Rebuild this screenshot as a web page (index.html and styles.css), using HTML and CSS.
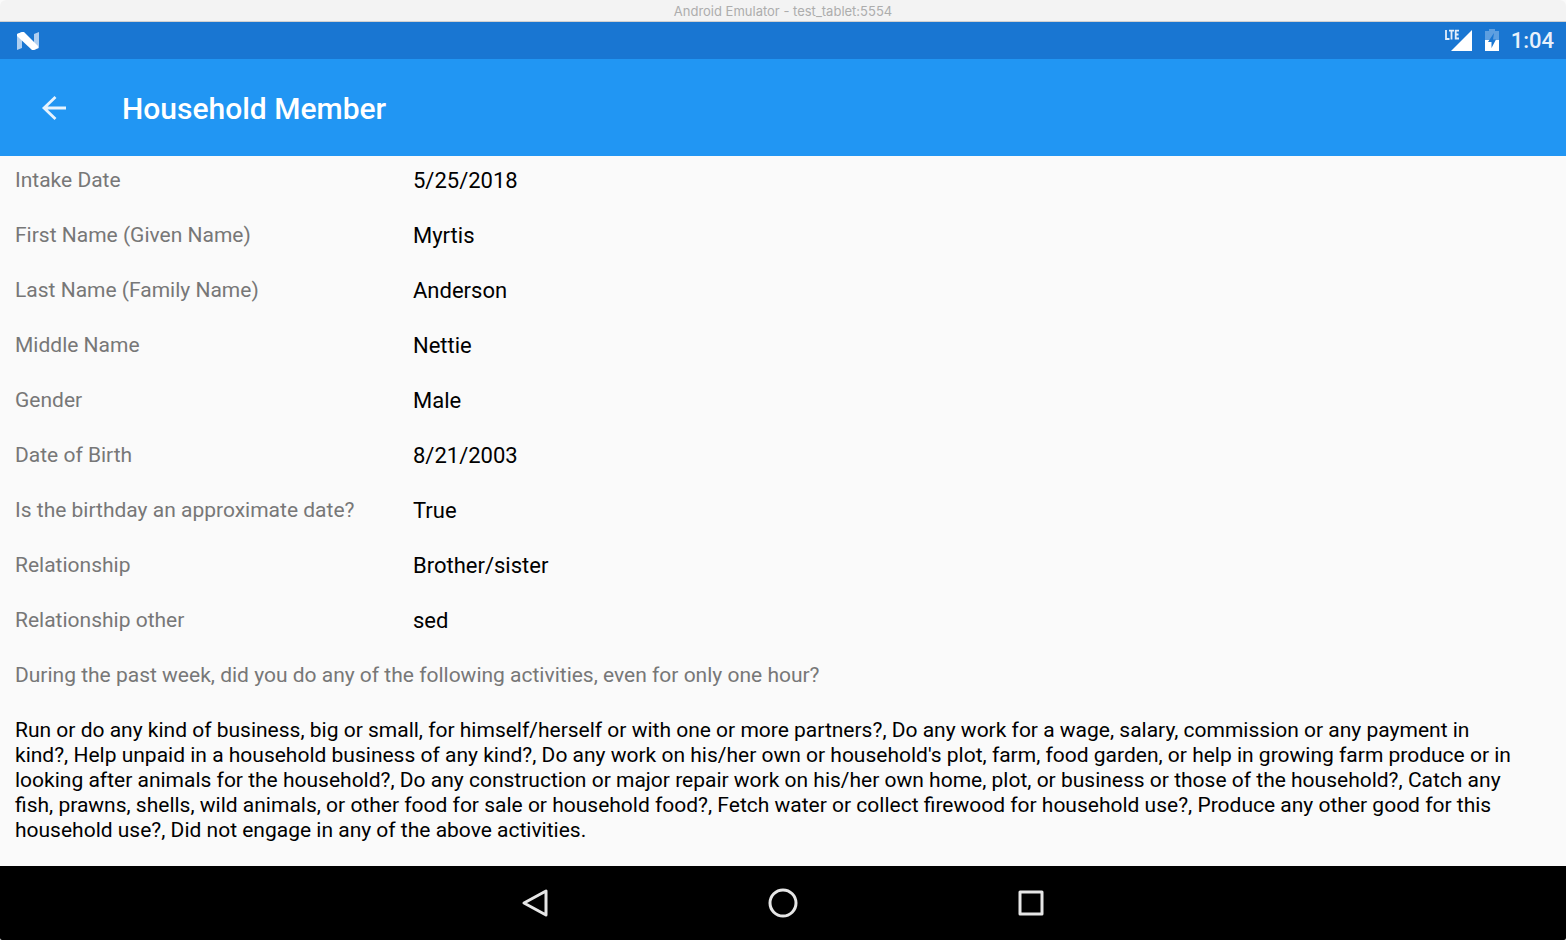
FILE: index.html
```html
<!DOCTYPE html>
<html lang="en">
<head>
<meta charset="utf-8">
<title>Household Member</title>
<link rel="stylesheet" href="styles.css">
</head>
<body>
<div class="window">
  <div class="titlebar">Android Emulator - test_tablet:5554</div>
  <div class="status">
    <svg class="logo" viewBox="0 0 24 20" width="24" height="20"><path d="M1 3L6 1V17L1 19Z" fill="#b0cff0"/><path d="M18 3L23 1V17L18 19Z" fill="#b0cff0"/><path d="M1 3L6 1H8L22 15V17L18 19H16L1 5Z" fill="#fff"/></svg>
    <div class="indicators">
      <svg viewBox="0 0 28 24" width="28" height="24"><path d="M27 1V22H6Z" fill="#fff"/><path d="M1 1V10H4.500M4 1.700H9M6.500 1V10.500M14 1.700H10.700V9.500H14M10 5.500H13.500" fill="none" stroke="#e3eefa" stroke-width="1.800"/></svg>
      <svg viewBox="0 0 14 24" width="14" height="24"><path d="M4 0H10V2H14V12H0V2H4Z" fill="#5e9fe0"/><path d="M0 11H14V22H0Z" fill="#fff"/><path d="M9 4L3 13H6.500V19L11 10.500H8Z" fill="#1976d2"/></svg>
      <span class="clock">1:04</span>
    </div>
  </div>
  <header class="appbar">
    <button class="back" aria-label="Back"><svg viewBox="0 0 26 26" width="26" height="26" fill="none" stroke="#e6f3fe" stroke-width="2.800"><path d="M25 13H3M14.500 2L3 13L14.500 24"/></svg></button>
    <h1 class="title">Household Member</h1>
  </header>
  <main class="content">
    <dl class="fields">
      <dt>Intake Date</dt><dd>5/25/2018</dd>
      <dt>First Name (Given Name)</dt><dd>Myrtis</dd>
      <dt>Last Name (Family Name)</dt><dd>Anderson</dd>
      <dt>Middle Name</dt><dd>Nettie</dd>
      <dt>Gender</dt><dd>Male</dd>
      <dt>Date of Birth</dt><dd>8/21/2003</dd>
      <dt>Is the birthday an approximate date?</dt><dd>True</dd>
      <dt>Relationship</dt><dd>Brother/sister</dd>
      <dt>Relationship other</dt><dd>sed</dd>
      <dt class="wide">During the past week, did you do any of the following activities, even for only one hour?</dt>
      <dd class="wide answer">Run or do any kind of business, big or small, for himself/herself or with one or more partners?, Do any work for a wage, salary, commission or any payment in kind?, Help unpaid in a household business of any kind?, Do any work on his/her own or household's plot, farm, food garden, or help in growing farm produce or in looking after animals for the household?, Do any construction or major repair work on his/her own home, plot, or business or those of the household?, Catch any fish, prawns, shells, wild animals, or other food for sale or household food?, Fetch water or collect firewood for household use?, Produce any other good for this household use?, Did not engage in any of the above activities.</dd>
    </dl>
  </main>
  <nav class="navbar">
    <button aria-label="Back"><svg viewBox="0 0 30 30" width="30" height="30"><path d="M26 3V27L4 15Z"/></svg></button>
    <button aria-label="Home"><svg viewBox="0 0 30 30" width="30" height="30"><circle cx="15" cy="15" r="13"/></svg></button>
    <button aria-label="Recent apps"><svg viewBox="0 0 30 30" width="30" height="30"><path d="M4 4H26V26H4Z"/></svg></button>
  </nav>
</div>
</body>
</html>
```
FILE: styles.css
```css
* { box-sizing: border-box; }
body { margin: 0; font-family: Roboto, "Liberation Sans", sans-serif; background: #fafafa; }
button { border: 0; padding: 0; background: none; display: flex; }
svg { display: block; }
.window { min-height: 100vh; display: flex; flex-direction: column; }
.titlebar { height: 22px; line-height: 23px; font-family: Inter, sans-serif; font-size: 13px; text-align: center; color: #adadad; background: #f3f3f3; border-bottom: 1px solid #d0d0d0; border-radius: 6px 6px 0 0; }
.status { height: 37px; padding: 0 12px 0 16px; display: flex; align-items: center; justify-content: space-between; background: #1976d2; color: #fff; }
.indicators { display: flex; align-items: center; gap: 12px; }
.clock { font-size: 22px; font-weight: 500; color: #e8f1fb; }
.appbar { height: 97px; padding: 0 41px; display: flex; align-items: center; gap: 55px; background: #2196f3; color: #fff; }
.title { margin: 0; font-size: 30px; font-weight: 500; padding-top: 2px; }
.content { flex: 1; padding: 12px 15px; }
.fields { margin: 0; display: grid; grid-template-columns: 398px 1fr; row-gap: 30px; font-size: 21px; line-height: 25px; }
.fields dt { color: #777; }
.fields dd { margin: 0; color: #000; font-size: 22px; }
.fields .wide { grid-column: 1 / -1; }
.fields .answer { padding-right: 30px; font-size: 21px; }
.navbar { height: 74px; display: flex; align-items: center; justify-content: center; gap: 218px; background: #000; border-radius: 0 0 2px 2px; }
.navbar svg { fill: none; stroke: #e6e6e6; stroke-width: 3; stroke-linejoin: round; }
```
